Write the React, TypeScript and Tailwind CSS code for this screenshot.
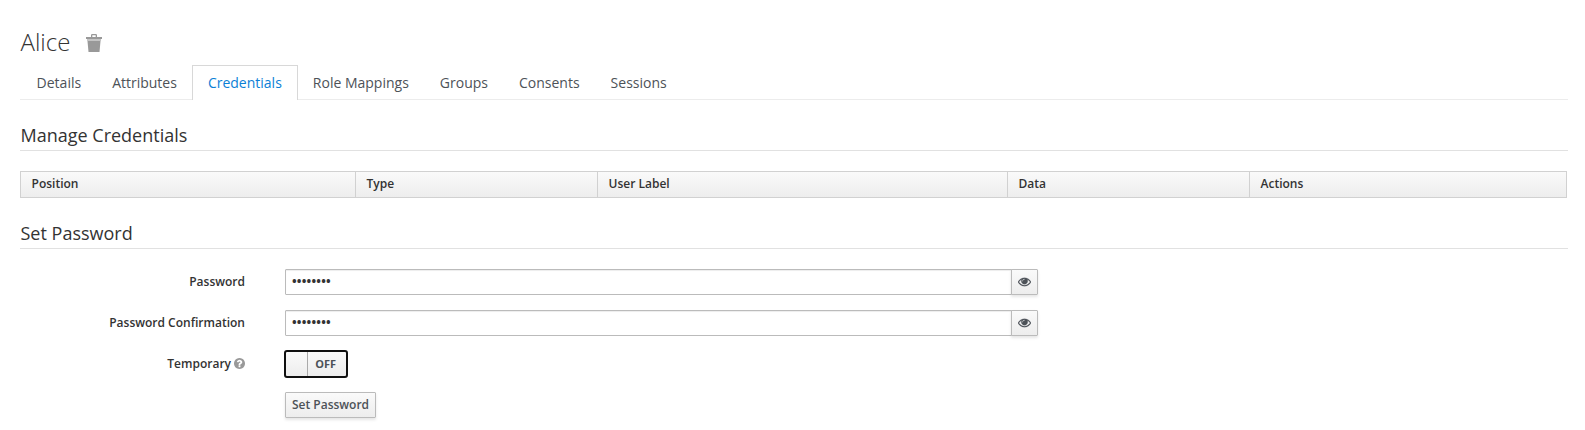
import { useState } from "react";

const tabs = ["Details", "Attributes", "Credentials", "Role Mappings", "Groups", "Consents", "Sessions"];

function TrashIcon() {
  return (
    <svg viewBox="0 0 16 19" className="h-[19px] w-4" aria-hidden="true">
      <path fill="#999999" d="M5 3V1.2Q5 0 6.2 0h3.600Q11 0 11 1.200V3H9.700V1.300H6.300V3z" />
      <path fill="#999999" d="M0 3h16V5H0z" />
      <path fill="#c4c4c4" d="M1 5h14v2H1z" />
      <path fill="#999999" d="M1.500 7h13L13.500 18H2.500z" />
    </svg>
  );
}

function EyeIcon() {
  return (
    <svg viewBox="0 0 1792 1792" className="-mt-px h-[13px] w-[13px]" fill="#4d5258" aria-hidden="true">
      <path
        stroke="#4d5258"
        strokeWidth="30"
        d="M1664 960q-152-236-381-353 61 104 61 225 0 185-131.500 316.500t-316.500 131.500-316.500-131.500-131.500-316.500q0-121 61-225-229 117-381 353 133 205 333.500 326.500t434.500 121.500 434.500-121.500 333.500-326.500zM944 576q0-20-14-34t-34-14q-125 0-214.500 89.500t-89.500 214.500q0 20 14 34t34 14 34-14 14-34q0-86 61-147t147-61q20 0 34-14t14-34zM1792 960q0 34-20 69-140 230-376.500 368.500t-499.500 138.500-499.500-139-376.500-368q-20-35-20-69t20-69q140-229 376.500-368t499.500-139 499.500 139 376.500 368q20 35 20 69z"
      />
    </svg>
  );
}

function HelpIcon() {
  return (
    <svg viewBox="0 0 1536 1536" className="-mt-px ml-[3px] h-[11px] w-[11px]" fill="#999999" aria-hidden="true">
      <path d="M896 1248v-192q0-14-9-23t-23-9H672q-14 0-23 9t-9 23v192q0 14 9 23t23 9h192q14 0 23-9t9-23zm256-672q0-88-55.500-163T958 297t-170-41q-243 0-371 213-15 24 8 42l132 100q7 6 19 6 16 0 25-12 53-68 86-92 34-24 86-24 48 0 85.500 26t37.500 59q0 38-20 61t-68 45q-63 28-115.500 86.500T640 892v36q0 14 9 23t23 9h192q14 0 23-9t9-23q0-19 21.500-49.500T972 829q32-18 49-28.500t46-35 44.500-48 28-60.500 12.500-81zm384 192q0 209-103 385.500T1153.500 1433 768 1536t-385.500-103T103 1153.500 0 768t103-385.500T382.500 103 768 0t385.500 103T1433 382.500 1536 768z" />
    </svg>
  );
}

function PasswordRow({ label, name }: { label: string; name: string }) {
  const [visible, setVisible] = useState(false);
  return (
    <div className="flex h-[26px] items-stretch">
      <label htmlFor={name} className="w-[225px] pt-[3px] text-right font-semibold leading-5">
        {label}
      </label>
      <div className="ml-10 flex">
        <input
          id={name}
          type={visible ? "text" : "password"}
          defaultValue="password"
          className="w-[727px] rounded-l-[1px] border border-[#bbbbbb] bg-white pl-1.5 pr-1.5 pt-px text-[12.4px] font-bold tracking-[0.2px] text-[#333333] shadow-[inset_0_1px_1px_rgba(0,0,0,0.075)] outline-none"
        />
        <button
          type="button"
          aria-label="Show password"
          onClick={() => setVisible(!visible)}
          className="-ml-px flex w-[27px] items-center justify-center rounded-r-[1px] border border-[#bbbbbb] bg-linear-to-b from-[#fafafa] to-[#ededed] shadow-[0_2px_3px_rgba(3,3,3,0.1)]"
        >
          <EyeIcon />
        </button>
      </div>
    </div>
  );
}

function SectionTitle({ children }: { children: string }) {
  return <h2 className="border-b border-[#e1e1e1] pb-[5px] pl-[0.5px] text-lg font-normal leading-5">{children}</h2>;
}

export default function App() {
  return (
    <main className="h-[430px] bg-white pl-5 pr-[17px] pt-7 font-['Open_Sans',sans-serif] text-xs text-[#333333]">
      <div className="flex h-[37px] items-start">
        <h1 className="pl-[0.5px] text-2xl font-light leading-[27px]">Alice</h1>
        <button type="button" aria-label="Delete" className="ml-4 mt-1.5">
          <TrashIcon />
        </button>
      </div>

      <nav className="flex h-[35px] border-b border-[#ececec] pl-[0.6px] text-sm leading-[34px]">
        {tabs.map((tab) => (
          <a
            key={tab}
            className={
              tab === "Credentials"
                ? "-mr-px h-[35px] border border-b-0 border-[#d8d8d8] bg-white px-[15px] text-[#0b7fd6]"
                : "-mr-px h-[35px] border border-b-0 border-transparent px-[15px] text-[#4d5258]"
            }
          >
            {tab}
          </a>
        ))}
      </nav>

      <section className="pt-[25px]">
        <SectionTitle>Manage Credentials</SectionTitle>
        <table className="mt-5 w-[1547px] table-fixed border-collapse">
          <thead>
            <tr className="h-[26px] bg-linear-to-b from-[#fafafa] to-[#ededed] text-left leading-4">
              <th className="w-[335px] border border-[#d1d1d1] pb-0.5 pl-[10.5px] font-semibold">Position</th>
              <th className="w-[242px] border border-[#d1d1d1] pb-0.5 pl-[10.5px] font-semibold">Type</th>
              <th className="w-[410px] border border-[#d1d1d1] pb-0.5 pl-[10.5px] font-semibold">User Label</th>
              <th className="w-[242px] border border-[#d1d1d1] pb-0.5 pl-[10.5px] font-semibold">Data</th>
              <th className="border border-[#d1d1d1] pb-0.5 pl-[10.5px] font-semibold">Actions</th>
            </tr>
          </thead>
        </table>
      </section>

      <section className="pt-[25px]">
        <SectionTitle>Set Password</SectionTitle>
        <form className="mt-5 flex flex-col gap-[15px]" onSubmit={(e) => e.preventDefault()}>
          <PasswordRow label="Password" name="password" />
          <PasswordRow label="Password Confirmation" name="confirmation" />
          <div className="flex h-[26px]">
            <div className="flex h-[26px] w-[225px] items-center justify-end font-semibold">
              <span>Temporary</span>
              <HelpIcon />
            </div>
            <button
              type="button"
              role="switch"
              aria-checked="false"
              className="-mt-px ml-[39px] flex h-7 w-16 rounded-[3px] border-2 border-[#101010] bg-linear-to-b from-[#fafafa] to-[#ededed]"
            >
              <span className="h-full w-[22px] border-r border-[#aaaaaa]" />
              <span className="flex-1 pr-[2.5px] text-center text-[11px] font-bold leading-6 text-[#4d5258]">OFF</span>
            </button>
          </div>
          <button
            type="submit"
            className="ml-[265px] h-[26px] w-[91px] rounded-[1px] border border-[#bbbbbb] bg-linear-to-b from-[#fafafa] to-[#ededed] font-semibold text-[#4d5258] shadow-[0_2px_3px_rgba(3,3,3,0.1)]"
          >
            Set Password
          </button>
        </form>
      </section>
    </main>
  );
}
